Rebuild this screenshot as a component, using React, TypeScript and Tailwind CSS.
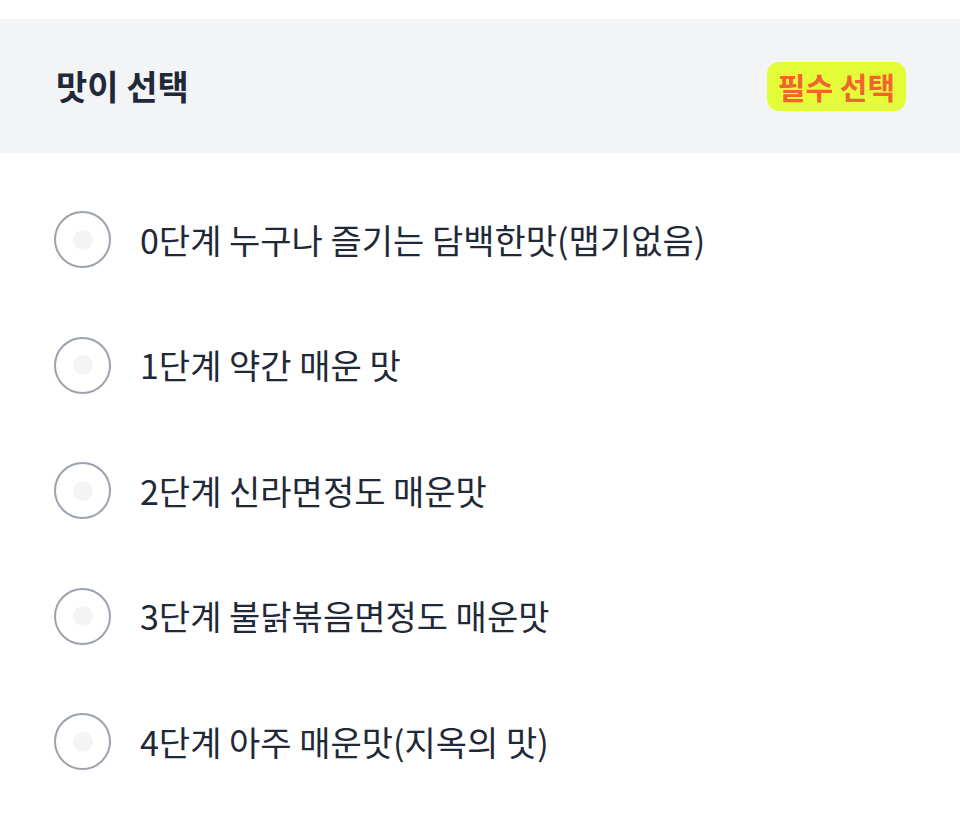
import React, { useState } from "react"

const options = [
  "0단계 누구나 즐기는 담백한맛(맵기없음)",
  "1단계 약간 매운 맛",
  "2단계 신라면정도 매운맛",
  "3단계 불닭볶음면정도 매운맛",
  "4단계 아주 매운맛(지옥의 맛)"
]

const font = {
  fontFamily: '"Noto Sans CJK KR", "Noto Sans", sans-serif'
}

export default function App() {
  const [selected, setSelected] = useState<number | null>(null)

  return (
    <div className="w-[960px] min-h-[824px] bg-white pt-[19px]" style={font}>
      <div className="flex h-[134px] items-center justify-between bg-[#f3f4f6] pl-[56px] pr-[54px]">
        <h2 className="text-[34px] font-bold leading-none text-[#1f2937]">맛이 선택</h2>
        <span className="flex h-[49px] items-center rounded-[12px] bg-[#e4fb3a] px-[11px] text-[30px] font-bold leading-none text-[#f0652b]">
          필수 선택
        </span>
      </div>
      <ul className="pt-[24px]">
        {options.map((label, i) => (
          <li key={label}>
            <button
              onClick={() => setSelected(i)}
              className="flex h-[125.5px] w-full items-center gap-[29px] pl-[54px] text-left"
            >
              <span className="flex h-[57px] w-[57px] shrink-0 items-center justify-center rounded-full border-2 border-[#9ca3af] bg-white">
                <span
                  className={
                    selected === i
                      ? "h-[20px] w-[20px] rounded-full bg-[#f0652b]"
                      : "h-[20px] w-[20px] rounded-full bg-[#f3f4f6]"
                  }
                />
              </span>
              <span className="text-[34px] leading-none text-[#1f2937]">{label}</span>
            </button>
          </li>
        ))}
      </ul>
    </div>
  )
}
